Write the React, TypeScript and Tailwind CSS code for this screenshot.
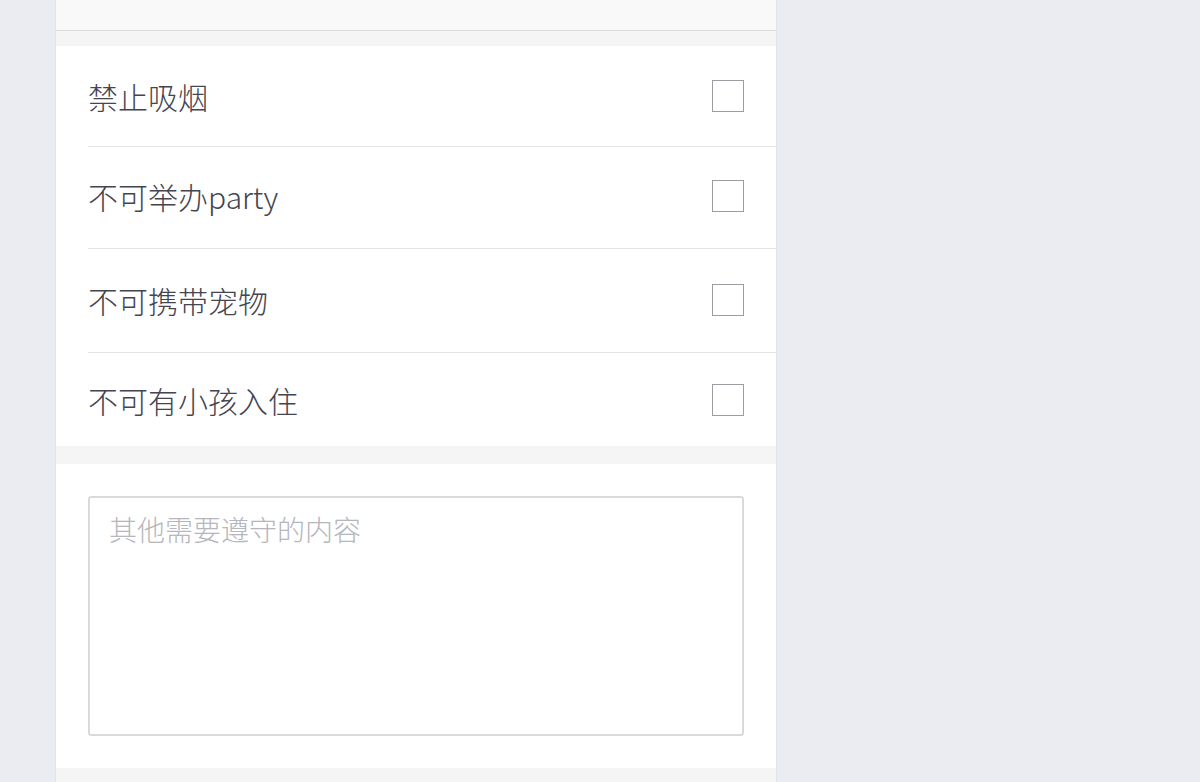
import React from "react";

const rows = [
  { label: "禁止吸烟", h: "h-[101px]", pb: "pb-0" },
  { label: "不可举办party", h: "h-[102px]", pb: "pb-[3px]" },
  { label: "不可携带宠物", h: "h-[104px]", pb: "pb-[1px]" },
  { label: "不可有小孩入住", h: "h-[93px]", pb: "pb-0" },
];

export default function App() {
  return (
    <div
      className="flex h-[782px] w-[1200px] overflow-hidden bg-[#ebecf2]"
      style={{ fontFamily: '"Noto Sans CJK SC", "Noto Sans", sans-serif' }}
    >
      <div className="w-[55px] shrink-0" />
      <div className="flex w-[722px] shrink-0 flex-col border-x border-[#dfe4ec] bg-[#f5f5f5]">
        <div className="h-[31px] shrink-0 border-b border-[#dcdcdc] bg-[#f9f9f9]" />
        <div className="h-[15px] shrink-0" />
        <div className="flex flex-col bg-white">
          {rows.map((r, i) => (
            <div key={r.label} className={`pl-[32px] ${r.h}`}>
              <div
                className={`flex h-full items-center justify-between pr-[32px] ${r.pb} ${
                  i < rows.length - 1 ? "border-b border-[#e4e4e6]" : ""
                }`}
              >
                <span className="text-[30px] font-light leading-none text-[#45454f]">{r.label}</span>
                <span className="h-[32px] w-[32px] border-[1.5px] border-[#9c9ca2] bg-white" />
              </div>
            </div>
          ))}
        </div>
        <div className="h-[18px] shrink-0" />
        <div className="bg-white p-[32px]">
          <div className="h-[240px] rounded-[3px] border-2 border-[#dadade] px-[19px] py-[17px]">
            <span className="text-[28px] font-light leading-none text-[#b6b6bc]">其他需要遵守的内容</span>
          </div>
        </div>
      </div>
    </div>
  );
}
